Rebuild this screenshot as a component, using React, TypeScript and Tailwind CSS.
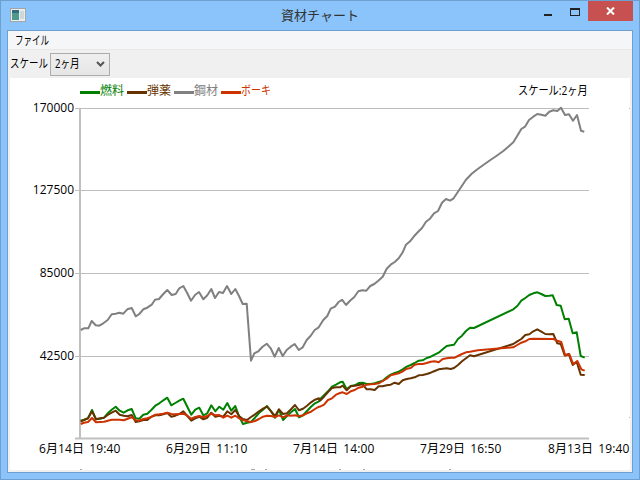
const UI_FONT = { fontFamily: '"Open Sans", "Noto Sans CJK JP", sans-serif' };

type Pt = [number, number];

// traced from the picture in 3x crops, so every run gets its crop origin
const run = (ox: number, oy: number, pts: Pt[]): Pt[] => pts.map(([x, y]) => [ox + x / 3, oy + y / 3]);
const toPoints = (pts: Pt[]) => pts.map(([x, y]) => `${x.toFixed(1)},${y.toFixed(1)}`).join(' ');

const gray: Pt[] = [
  ...run(60, 270, [[62,180],[72,175],[85,175],[95,153],[107,166],[118,167],[130,160],[143,150],[155,133],[167,131],[178,128],[190,131],[202,118],[215,114],[227,139],[238,132],[250,118],[262,113],[275,104],[285,89],[297,87],[310,72],[322,60],[335,75],[347,72],[358,55],[370,48],[382,70],[393,92],[405,75],[417,66],[430,88],[442,76],[454,57],[465,84],[477,66],[489,69],[501,48],[514,72],[526,57],[537,78],[548,102],[560,101],[573,272],[583,250],[595,244],[607,231],[620,221],[632,235],[644,260],[656,234],[668,258],[680,240],[692,230],[704,222],[716,240],[728,232],[740,210],[752,197],[764,180],[776,172]]),
  ...run(240, 170, [[250,450],[262,438],[272,416],[285,410],[295,397],[306,389],[318,405],[330,392],[343,381],[355,364],[367,361],[379,362],[391,348],[403,342],[415,332],[428,320],[440,296],[452,284],[464,276],[476,265],[488,247],[498,224],[510,214],[522,199],[534,186],[546,174],[558,155],[570,146],[582,130],[594,123],[606,98],[618,87],[630,92],[640,86],[652,68],[664,50],[676,32]]),
  ...run(440, 95, [[80,252],[95,236],[110,224],[130,210],[150,196],[170,182],[190,168],[205,155],[220,142],[232,122],[244,102],[255,95],[267,75],[280,65],[292,57],[304,59],[316,62],[328,50],[340,46],[352,48],[363,38],[375,60],[387,58],[399,77],[411,60],[423,107],[433,110]]),
];

const green: Pt[] = [
  ...run(60, 270, [[62,452],[72,449],[84,445],[96,420],[108,448],[120,446],[132,443],[143,430],[155,419],[167,410],[179,422],[191,428],[203,421],[215,417],[227,445],[238,446],[250,434],[262,431],[274,420],[286,407],[298,400],[310,391],[322,383],[334,406],[346,399],[358,392],[370,386],[382,410],[394,434],[406,419],[418,413],[430,436],[442,430],[454,406],[466,424],[478,410],[490,419],[502,399],[514,422],[526,408],[537,438],[549,462],[561,458],[573,456],[585,443],[597,429],[609,419],[621,408],[633,423],[645,443],[657,419],[669,450],[681,438],[693,427],[705,417],[717,442],[729,436],[741,423],[753,410],[765,400],[777,394]]),
  ...run(320, 270, [[0,388],[12,376],[24,364],[36,350],[48,344],[60,337],[68,335],[80,358],[92,348],[104,346],[116,339],[128,338],[140,342],[152,342],[164,340],[176,336],[188,332],[200,322],[212,314],[224,309],[236,305],[248,298],[260,290],[272,285],[284,279],[296,272],[308,271],[320,264],[332,260],[344,254],[356,248],[368,238],[380,228],[392,226],[402,224],[414,207],[426,197],[438,183],[450,173],[462,174],[580,118],[592,108],[604,92],[616,84],[628,75],[640,70],[652,67],[664,72],[676,78],[688,77],[698,76],[710,105],[722,107],[734,148],[746,146],[758,190],[770,187],[782,258],[794,263]]),
];

const brown: Pt[] = [
  ...run(60, 270, [[62,455],[72,450],[84,445],[96,424],[108,448],[120,445],[132,443],[143,435],[155,428],[167,422],[179,434],[191,437],[203,439],[215,435],[227,456],[238,454],[250,450],[262,450],[274,440],[286,436],[298,436],[310,433],[322,429],[334,440],[346,437],[358,432],[370,424],[382,438],[394,452],[406,445],[418,440],[430,448],[442,443],[454,428],[466,440],[478,437],[490,440],[502,424],[514,433],[526,420],[537,438],[549,447],[561,450],[573,441],[585,433],[597,424],[609,416],[621,410],[633,424],[645,438],[657,418],[669,432],[681,430],[693,418],[705,405],[717,421],[729,416],[741,407],[753,397],[765,389],[777,385]]),
  ...run(320, 270, [[0,392],[12,380],[24,366],[36,354],[48,352],[60,352],[68,347],[80,361],[92,349],[104,347],[116,345],[128,343],[140,358],[152,358],[164,360],[176,349],[188,349],[200,346],[212,344],[224,338],[236,342],[248,331],[260,327],[272,325],[284,322],[296,316],[308,315],[320,312],[332,308],[344,303],[356,298],[368,296],[380,295],[392,297],[402,294],[414,285],[426,274],[438,265],[450,256],[462,259],[474,255],[580,222],[592,214],[604,207],[616,195],[628,193],[640,184],[652,178],[664,185],[676,192],[688,193],[700,192],[712,220],[722,222],[734,256],[746,252],[758,285],[770,275],[782,314],[794,315]]),
];

const orange: Pt[] = [
  ...run(60, 270, [[62,462],[72,458],[84,456],[96,444],[108,457],[120,456],[132,455],[143,452],[155,449],[167,449],[179,449],[191,451],[203,446],[215,442],[227,451],[238,452],[250,447],[262,445],[274,441],[286,434],[298,433],[310,431],[322,428],[334,432],[346,433],[358,432],[370,431],[382,437],[394,446],[406,441],[418,438],[430,442],[442,438],[454,431],[466,436],[478,435],[490,443],[502,437],[514,443],[526,437],[537,445],[549,450],[561,454],[573,456],[585,453],[597,447],[609,440],[621,437],[633,438],[645,441],[657,436],[669,442],[681,436],[693,437],[705,436],[717,439],[729,436],[741,430],[753,425],[765,417],[777,410]]),
  ...run(320, 270, [[0,410],[12,404],[24,390],[36,385],[48,374],[60,369],[68,367],[80,372],[92,364],[104,360],[116,353],[128,350],[140,344],[152,343],[164,342],[176,340],[188,333],[200,326],[212,316],[224,313],[236,310],[248,304],[260,296],[272,294],[284,284],[296,282],[308,282],[320,279],[332,275],[344,274],[356,277],[368,267],[380,265],[392,263],[404,263],[414,258],[426,252],[438,247],[450,245],[462,243],[474,241],[580,232],[592,225],[604,218],[616,214],[628,207],[640,206],[700,207],[712,212],[724,216],[736,257],[748,252],[760,283],[772,273],[784,298],[794,302]]),
];

const series = [
  { pts: gray, color: '#808080' },
  { pts: green, color: '#008000' },
  { pts: brown, color: '#663300' },
  { pts: orange, color: '#cc3300' },
];

// the reference font has narrow kana, so kana labels get squeezed sideways
const legend = [
  { name: '燃料', line: 'bg-[#008000]', text: 'text-[#008000]', box: '' },
  { name: '弾薬', line: 'bg-[#663300]', text: 'text-[#663300]', box: '' },
  { name: '鋼材', line: 'bg-[#808080]', text: 'text-[#808080]', box: '' },
  { name: 'ボーキ', line: 'bg-[#cc3300]', text: 'text-[#cc3300]', box: 'w-[30px] origin-left scale-x-[0.83]' },
];

const yTicks = [
  { y: 108, label: '170000' },
  { y: 190, label: '127500' },
  { y: 273, label: '85000' },
  { y: 356, label: '42500' },
];

const xTicks = [
  { x: 39, label: '6月14日 19:40' },
  { x: 166, label: '6月29日 11:10' },
  { x: 293, label: '7月14日 14:00' },
  { x: 420, label: '7月29日 16:50' },
  { x: 548, label: '8月13日 19:40' },
];

// clipped remains of something below the plot
const specks = [80, 251, 253, 265, 339, 363, 449];

function Chart() {
  return (
    <svg width="620" height="372" viewBox="10 98 620 372" className="block">
      {yTicks.map((t) => (
        <g key={t.y}>
          <line x1="75" x2="589" y1={t.y + 0.5} y2={t.y + 0.5} stroke="#bdbdbd" />
          <text x="74" y={t.y + 4} textAnchor="end" fontSize="12" fill="#000">{t.label}</text>
        </g>
      ))}
      <rect x="79" y="108" width="2" height="331" fill="#c0c0c0" />
      <rect x="75" y="437.5" width="514" height="2" fill="#c0c0c0" />
      {series.map((s) => (
        <polyline
          key={s.color}
          points={toPoints(s.pts)}
          fill="none"
          stroke={s.color}
          strokeWidth="2"
          strokeLinejoin="round"
        />
      ))}
      {xTicks.map((t) => (
        <text key={t.x} x={t.x} y="453" fontSize="12" fill="#000" letterSpacing="0.1" wordSpacing="2">{t.label}</text>
      ))}
      {specks.map((x) => (
        <rect key={x} x={x} y="469" width="2" height="1" fill="#aaa" />
      ))}
      <rect x="629" y="108" width="1" height="1" fill="#bbb" />
      <rect x="629" y="417" width="1" height="1" fill="#bbb" />
    </svg>
  );
}

function AppIcon() {
  return (
    <svg width="16" height="14" viewBox="0 0 16 14">
      <rect x="0.5" y="0.5" width="15" height="13" fill="#e8eef2" stroke="#a5a5a5" />
      <rect x="2" y="2" width="7" height="10" fill="#4f9a8c" />
      <rect x="2" y="2" width="7" height="3" fill="#2f6f7f" />
      <rect x="10" y="3" width="4" height="8" fill="#cfd8d8" />
    </svg>
  );
}

export default function App() {
  return (
    <div className="w-[640px] h-[480px] flex flex-col bg-[#8ac4fa] border border-[#6f9fcf] overflow-hidden text-black text-xs" style={UI_FONT}>
      {/* TITLE BAR */}
      <div className="h-[29px] shrink-0 grid grid-cols-[1fr_auto_1fr]">
        <div className="pl-[9px] pt-[7px]">
          <AppIcon />
        </div>
        <div className="text-[13px] leading-[29px] text-[#333]">資材チャート</div>
        <div className="flex justify-end items-start pr-[6px]">
          <div className="w-[27px] h-[20px] flex items-center justify-center">
            <div className="w-[8px] h-[2px] mt-[7px] bg-[#222]" />
          </div>
          <div className="w-[27px] h-[20px] flex items-center justify-center">
            <div className="w-[10px] h-[8px] mt-[2px] border border-t-2 border-[#222]" />
          </div>
          <div className="w-[45px] h-[20px] flex items-center justify-center bg-[#c75050]">
            <svg width="9" height="8" viewBox="0 0 9 8">
              <path d="M1 0.5 L8 7.5 M8 0.5 L1 7.5" stroke="#fff" strokeWidth="2" />
            </svg>
          </div>
        </div>
      </div>

      {/* CLIENT AREA */}
      <div className="mx-[6px] mb-[6px] flex-1 flex flex-col bg-[#f0f0f0] border border-[#6f9fcf]">
        <div className="h-[19px] shrink-0 pl-[7px] pt-[1px] bg-[#f5f6f7] border-b border-[#e8e8e8] leading-[18px]">
          <span className="inline-block w-[34px] origin-left scale-x-[0.71] whitespace-nowrap">ファイル</span>
        </div>
        <div className="h-[28px] shrink-0 flex items-center gap-[2px] pl-[2px]">
          <span className="inline-block w-[38px] origin-left scale-x-[0.79] whitespace-nowrap">スケール</span>
          <div className="w-[60px] h-[23px] flex items-center justify-between pl-[4px] pr-[4px] border border-[#acacac] bg-gradient-to-b from-[#f0f0f0] to-[#e5e5e5]">
            <span className="inline-block w-[25px] origin-left scale-x-[0.8] whitespace-nowrap">2ヶ月</span>
            <svg width="9" height="6" viewBox="0 0 9 6">
              <path d="M1 1 L4.5 4.5 L8 1" fill="none" stroke="#555" strokeWidth="2" />
            </svg>
          </div>
        </div>
        <div className="mx-[2px] mb-[2px] flex-1 bg-white">
          <div className="h-[20px] flex items-center pt-[6px] pl-[70px] pr-[42px]">
            <div className="flex items-center gap-[3px]">
              {legend.map((l) => (
                <div key={l.name} className="flex items-center">
                  <div className={`w-[20px] h-[3px] mt-[3px] ${l.line}`} />
                  <span className={`inline-block whitespace-nowrap ${l.text} ${l.box}`}>{l.name}</span>
                </div>
              ))}
            </div>
            <span className="ml-auto inline-block w-[70px] origin-left scale-x-[0.85] whitespace-nowrap">スケール:2ヶ月</span>
          </div>
          <Chart />
        </div>
      </div>
    </div>
  );
}
